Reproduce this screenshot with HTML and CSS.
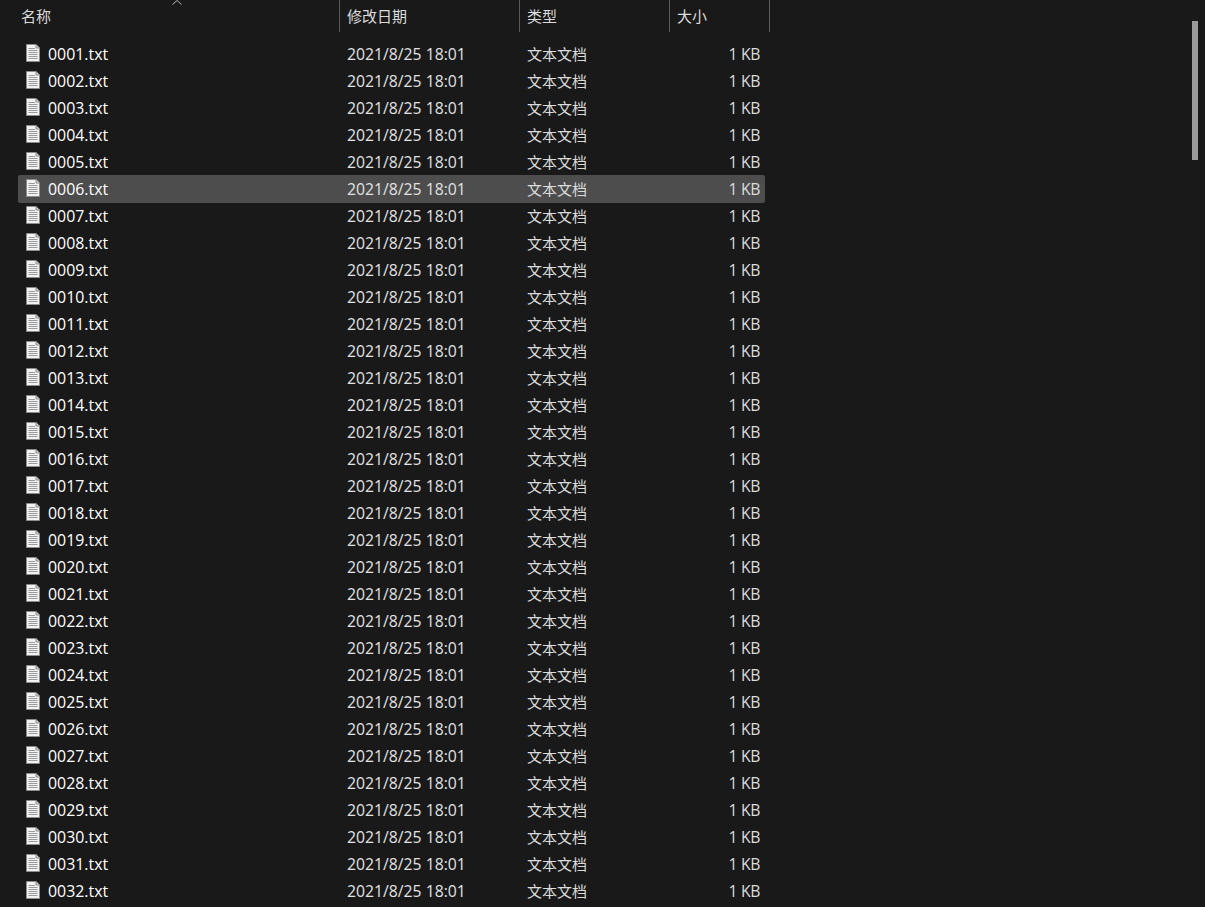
FILE: index.html
```html
<!DOCTYPE html>
<html lang="zh-CN">
<head>
<meta charset="utf-8">
<title>文件列表</title>
<link rel="stylesheet" href="styles.css">
</head>
<body>
<svg class="defs" width="0" height="0" aria-hidden="true">
  <symbol id="doc" viewBox="0 0 14 18">
    <path d="M.5.5H10L13.500 4V17.500H.5Z" fill="#f2f2f2" stroke="#8c8c8c"/>
    <path d="M10 .5V4H13.500" fill="#cfcfcf" stroke="#8c8c8c"/>
    <path d="M2.500 4.500H9M2.500 6.500H11.500M2.500 8.500H11.500M2.500 10.500H11.500M2.500 12.500H11.500M2.500 14.500H11.500" stroke="#9a9a9a" fill="none"/>
  </symbol>
</svg>
<main class="explorer">
  <header class="head">
    <div class="hc hc-name">名称<svg class="sort" width="10" height="5" viewBox="0 0 10 5"><path d="M.5 4.500L5 .5L9.500 4.500" fill="none" stroke="#b5b5b5"/></svg></div>
    <div class="hc hc-date">修改日期</div>
    <div class="hc hc-type">类型</div>
    <div class="hc hc-size">大小</div>
  </header>
  <section class="list" id="list"></section>
</main>
<div class="thumb"></div>
<script src="app.js"></script>
</body>
</html>
```
FILE: app.js
```js
var list = document.getElementById('list');
var html = '';
for (var i = 1; i <= 32; i++) {
  var n = ('000' + i).slice(-4);
  html += '<div class="row' + (i === 6 ? ' selected' : '') + '">' +
    '<div class="name"><svg class="icon"><use href="#doc"></use></svg><span>' + n + '.txt</span></div>' +
    '<div class="date">2021/8/25 18:01</div>' +
    '<div class="type">文本文档</div>' +
    '<div class="size">1 KB</div></div>';
}
list.innerHTML = html;
```
FILE: styles.css
```css
* { box-sizing: border-box; }
html, body { height: 100%; }
body {
  margin: 0;
  background: #191919;
  color: #fff;
  font: 15px/29px "Open Sans", "Noto Sans CJK SC", sans-serif;
  overflow: hidden;
  position: relative;
}
.defs { position: absolute; }
.explorer { width: 770px; }
.head {
  display: grid;
  grid-template-columns: 340px 180px 150px 100px;
  height: 32px;
}
.hc {
  position: relative;
  height: 32px;
  padding-left: 7px;
  line-height: 33px;
  color: #dcdcdc;
  border-right: 1px solid #5a5a5a;
}
.hc-name { padding-left: 21px; }
.sort { position: absolute; left: 172px; top: 0; }
.list { padding: 8px 0 0 18px; }
.row {
  display: grid;
  grid-template-columns: 322px 180px 150px 95px;
  width: 747px;
  height: 27px;
  border-radius: 2px;
}
.row.selected { background: #4d4d4d; box-shadow: 0 1px #4d4d4d; }
.name { display: flex; align-items: flex-start; padding-left: 8px; font-size: 15.9px; }
.icon { width: 14px; height: 18px; margin: 4px 8px 0 0; flex: none; }
.date { padding-left: 7px; color: #e2e2e2; font-size: 15.75px; }
.type { padding-left: 7px; color: #dcdcdc; }
.size { text-align: right; padding-right: 5px; color: #dcdcdc; font-size: 15.75px; letter-spacing: -.35px; }
.thumb {
  position: absolute;
  left: 1192px;
  top: 21px;
  width: 6px;
  height: 139px;
  background: #9b9b9b;
}
```
